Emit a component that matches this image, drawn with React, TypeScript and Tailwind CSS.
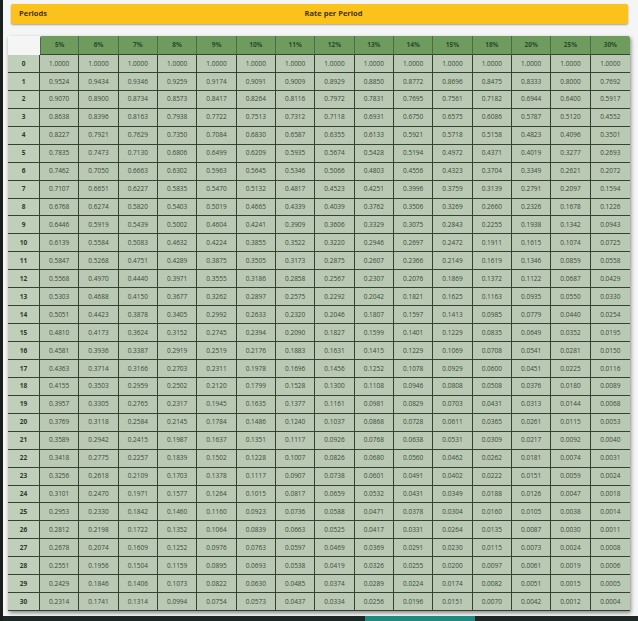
import React from "react";

const rates = [5, 6, 7, 8, 9, 10, 11, 12, 13, 14, 15, 18, 20, 25, 30];
const periods = Array.from({ length: 31 }, (_, i) => i);

export default function App() {
  return (
    <div
      className="relative w-[638px] h-[621px] bg-[#f4f5f4] overflow-hidden border-l-[3px] border-[#1a1f1e]"
      style={{ fontFamily: '"Open Sans", "Noto Sans", sans-serif' }}
    >
      <div className="pt-[4px] pl-[8px] pr-[10px]">
        <div className="h-[20px] bg-[#fcc21c] rounded-[2px] shadow-[0_1px_2px_rgba(0,0,0,0.35)] flex items-center px-[8px] relative">
          <span className="text-[7.5px] font-bold text-[#4a3312]">Periods</span>
          <span className="absolute left-[28px] right-0 text-center text-[7.5px] font-bold text-[#4a3312] pointer-events-none">
            Rate per Period
          </span>
        </div>
      </div>
      <div className="ml-[5px] mt-[12px] w-[622px] shadow-[1px_2px_4px_rgba(0,0,0,0.45)]">
        <div className="grid grid-cols-[32px_repeat(15,1fr)]">
          <div className="h-[19px] bg-[#f4f5f4]" />
          {rates.map((r, i) => (
            <div
              key={r}
              className={`h-[19px] bg-[#6e9c5f] border-b border-[#35452f] flex items-center justify-center text-[6.5px] font-bold text-[#2e4a2a] ${
                i < rates.length - 1 ? "border-r border-r-[#4d6b45]" : ""
              } ${i === 0 ? "border-l border-l-[#4d6b45] rounded-tl-[2px]" : ""} ${i === rates.length - 1 ? "rounded-tr-[2px]" : ""}`}
            >
              {r}%
            </div>
          ))}
          {periods.map((n) => (
            <React.Fragment key={n}>
              <div className="h-[17.95px] bg-[#bfcfb9] border-r border-b border-[#344232] flex items-center justify-center text-[6.5px] font-bold text-[#2f3a2e]">
                {n}
              </div>
              {rates.map((r, i) => (
                <div
                  key={r}
                  className={`h-[17.95px] bg-[#b9c9b3] border-b border-[#344232] flex items-center justify-center text-[6.5px] text-[#3d4a3c] ${
                    i < rates.length - 1 ? "border-r" : ""
                  }`}
                >
                  {(1 / Math.pow(1 + r / 100, n)).toFixed(4)}
                </div>
              ))}
            </React.Fragment>
          ))}
        </div>
      </div>
      <div className="absolute left-0 right-0 bottom-0 h-[5px] bg-[#1b2826]">
        <div className="absolute left-[362px] w-[110px] top-0 bottom-0 bg-[#1f8a82]" />
      </div>
    </div>
  );
}
